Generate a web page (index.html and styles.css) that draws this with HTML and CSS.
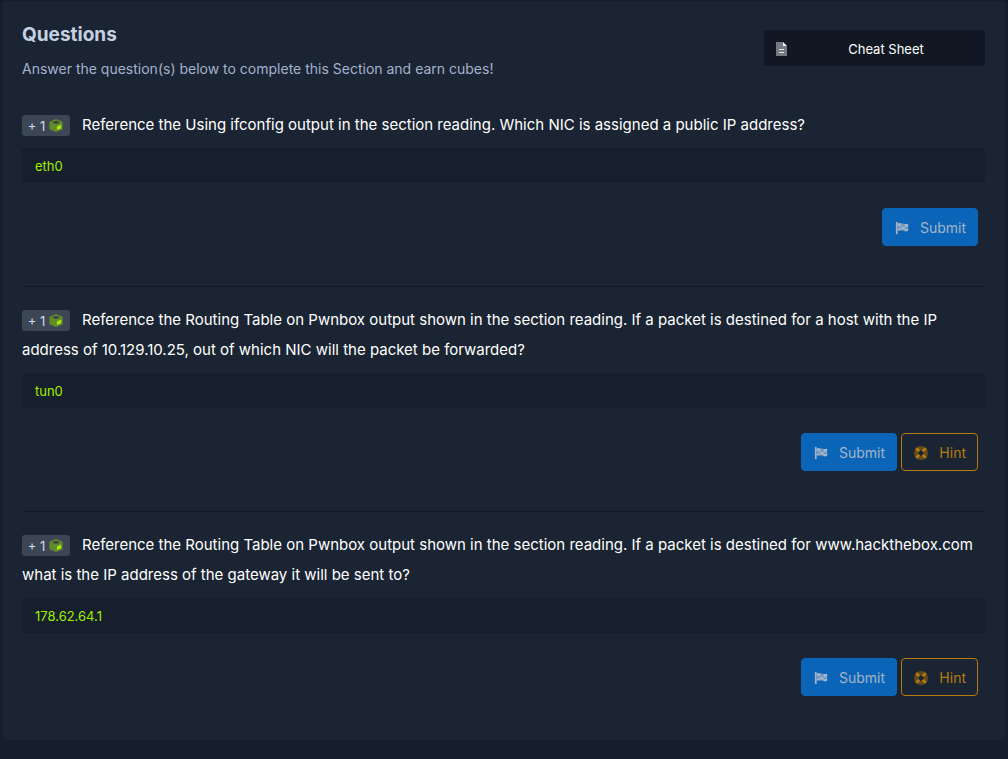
FILE: index.html
```html
<!DOCTYPE html>
<html lang="en">
<head>
<meta charset="utf-8">
<meta name="viewport" content="width=device-width, initial-scale=1">
<title>Questions</title>
<link rel="stylesheet" href="styles.css">
</head>
<body>
<svg class="sprite" aria-hidden="true">
  <symbol id="cube" viewBox="0 0 16 16">
    <path fill="#64892c" d="M8 1 15 4v8L8 15 1 12V4z"/>
    <path fill="#36443f" d="M8 3 12.500 4.500 8 6.300 3.500 4.500z"/>
    <path fill="#9fef00" d="M9 9 13.500 7v4L9 12.800z"/>
  </symbol>
  <symbol id="flag" viewBox="0 0 16 16">
    <path fill="#a5b4c6" d="M1 1h2v14H1z"/>
    <path fill="#7199c5" d="M3 3c4-2 7 2 12 0v8c-5 2-8-2-12 0z"/>
    <path fill="#a5b4c6" d="M3 3q2-1 4 0v3q-2-1-4 0zM11 3.500q2 0 4-.5v3q-2 1-4 1zM7 6q2 1 4 1v3q-2 0-4-1zM3 9q2-1 4 0v2q-2-1-4 0zM11 9.500q2 0 4-1V11q-2 1-4 .8z"/>
  </symbol>
  <symbol id="ring" viewBox="0 0 16 16">
    <circle cx="8" cy="8" r="5.500" fill="none" stroke="#614b1d" stroke-width="5"/>
    <path stroke="#b57b0d" stroke-width="3" d="m2.500 2.500 3.500 3.500M13.500 2.500 10 6M2.500 13.500 6 10M13.500 13.500 10 10"/>
  </symbol>
  <symbol id="file" viewBox="0 0 12 16">
    <path fill="#757981" d="M1 1h7v4h4v10H1z"/>
    <path fill="#fff" d="m8 1 4 4H8z"/>
    <path fill="#e1e3e6" d="M4 8h5v1H4zM4 11h5v1H4z"/>
  </symbol>
</svg>
<main class="card">
  <header class="head">
    <div>
      <h1 class="title">Questions</h1>
      <p class="subtitle">Answer the question(s) below to complete this Section and earn cubes!</p>
    </div>
    <button class="cheat" type="button"><svg class="file-icon" aria-hidden="true"><use href="#file"/></svg><span class="cheat-label">Cheat Sheet</span></button>
  </header>
  <form class="question">
    <label class="prompt" for="a1"><span class="badge">+ 1 <svg class="cube-icon" aria-hidden="true"><use href="#cube"/></svg></span>Reference the Using ifconfig output in the section reading. Which NIC is assigned a public IP address?</label>
    <input class="answer" id="a1" type="text" value="eth0">
    <div class="actions">
      <button class="btn submit" type="button"><svg class="icon" aria-hidden="true"><use href="#flag"/></svg>Submit</button>
    </div>
  </form>
  <form class="question">
    <label class="prompt" for="a2"><span class="badge">+ 1 <svg class="cube-icon" aria-hidden="true"><use href="#cube"/></svg></span>Reference the Routing Table on Pwnbox output shown in the section reading. If a packet is destined for a host with the IP address of 10.129.10.25, out of which NIC will the packet be forwarded?</label>
    <input class="answer" id="a2" type="text" value="tun0">
    <div class="actions">
      <button class="btn submit" type="button"><svg class="icon" aria-hidden="true"><use href="#flag"/></svg>Submit</button>
      <button class="btn hint" type="button"><svg class="icon" aria-hidden="true"><use href="#ring"/></svg>Hint</button>
    </div>
  </form>
  <form class="question">
    <label class="prompt" for="a3"><span class="badge">+ 1 <svg class="cube-icon" aria-hidden="true"><use href="#cube"/></svg></span>Reference the Routing Table on Pwnbox output shown in the section reading. If a packet is destined for www.hackthebox.com what is the IP address of the gateway it will be sent to?</label>
    <input class="answer" id="a3" type="text" value="178.62.64.1">
    <div class="actions">
      <button class="btn submit" type="button"><svg class="icon" aria-hidden="true"><use href="#flag"/></svg>Submit</button>
      <button class="btn hint" type="button"><svg class="icon" aria-hidden="true"><use href="#ring"/></svg>Hint</button>
    </div>
  </form>
</main>
</body>
</html>
```
FILE: styles.css
```css
* { box-sizing: border-box; }
body {
  margin: 0;
  padding: 1px 2px;
  background: #151e2c;
  color: #fff;
  font-family: Inter, "Liberation Sans", sans-serif;
}
.sprite { position: absolute; width: 0; height: 0; }
.card {
  padding: 19px 21px 4px 20px;
  border-radius: 4px;
  background: #1b2432;
}
.head {
  display: flex;
  justify-content: space-between;
  align-items: flex-start;
  margin-bottom: 26px;
}
.title {
  margin: 0;
  font-size: 19px;
  line-height: 30px;
  font-weight: 700;
  color: #c5d1e3;
}
.subtitle {
  margin: 4px 0 0;
  font-size: 14px;
  line-height: 30px;
  color: #a4b1cd;
}
.cheat {
  display: flex;
  align-items: center;
  width: 221px;
  height: 36px;
  margin-top: 10px;
  padding: 2px 12px 0 11px;
  border: 0;
  border-radius: 3px;
  background: #111823;
  color: #fff;
  font: 400 13px/20px Inter, "Liberation Sans", sans-serif;
}
.file-icon { width: 12px; height: 16px; }
.cheat-label { flex: 1; padding-left: 12px; text-align: center; }
.question { padding-bottom: 40px; }
.question + .question {
  padding-top: 18px;
  border-top: 1px solid #111925;
}
.prompt {
  display: block;
  font-size: 15px;
  line-height: 30px;
}
.badge {
  display: inline-flex;
  align-items: center;
  justify-content: center;
  gap: 3px;
  width: 48px;
  height: 21px;
  margin-right: 12px;
  border-radius: 3px;
  background: #3d4655;
  color: #d3dcea;
  font-size: 13px;
  line-height: 20px;
  vertical-align: middle;
}
.cube-icon { width: 16px; height: 15px; }
.answer {
  display: block;
  width: 100%;
  height: 35px;
  margin-top: 8px;
  padding: 0 13px;
  border: 0;
  border-radius: 4px;
  background: #171f2d;
  color: #9fef00;
  font: 400 13px/20px Inter, "Liberation Sans", sans-serif;
}
.actions {
  display: flex;
  justify-content: flex-end;
  gap: 4px;
  margin-top: 25px;
  padding-right: 7px;
}
.btn {
  display: flex;
  align-items: center;
  justify-content: space-between;
  height: 38px;
  padding: 2px 11px 0;
  border: 1px solid;
  border-radius: 4px;
  font: 400 14px/20px Inter, "Liberation Sans", sans-serif;
}
.submit { width: 96px; border-color: #0a65b9; background: #0a65b9; color: #a5b4c6; }
.hint { width: 77px; border-color: #b57b0d; background: transparent; color: #b57b0d; }
.icon { width: 16px; height: 14px; }
```
